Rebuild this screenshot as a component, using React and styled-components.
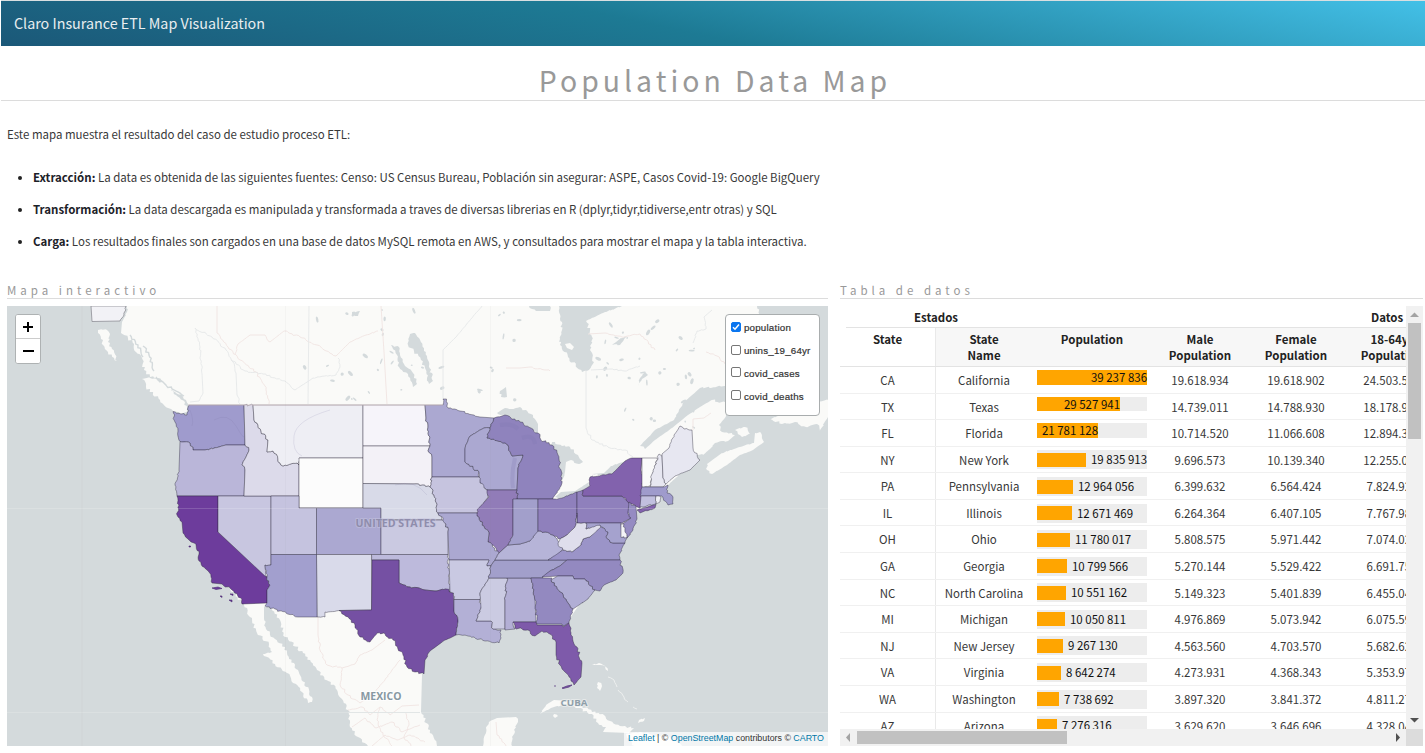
import React from "react";
import styled, { createGlobalStyle } from "styled-components";

const sans = '"Noto Sans CJK SC", "Noto Sans", sans-serif';

const GlobalStyle = createGlobalStyle`
  * { box-sizing: border-box; }
  html, body { margin: 0; padding: 0; background: #fff; overflow: hidden; }
  body { font-family: ${sans}; font-size: 11.47px; color: #383838; }
`;

const Page = styled.div`
  width: 1425px;
  height: 753px;
  display: flex;
  flex-direction: column;
  overflow: hidden;
`;

const Navbar = styled.header`
  height: 46px;
  flex: none;
  margin-left: 1px;
  padding: 0 0 2px 13px;
  border-top: 1px solid #d9dfe1;
  display: flex;
  align-items: center;
  background: linear-gradient(12deg, #1b5878 0%, #1d7a94 46%, #43c0e7 100%);
  color: #e9eef0;
  font-size: 14.3px;
  font-weight: 400;
`;

const Title = styled.h1`
  flex: none;
  margin: 0 0 0 1px;
  height: 55px;
  padding: 13px 0 0 4px;
  border-bottom: 1px solid #dcdcdc;
  text-align: center;
  font-size: 28.4px;
  line-height: 42px;
  font-weight: 400;
  letter-spacing: 4px;
  color: #999;
`;

const Intro = styled.section`
  flex: none;
  height: 182px;
  padding: 23px 0 0 7px;
  line-height: 20px;
`;

const Paragraph = styled.p`
  margin: 0;
`;

const List = styled.ul`
  margin: 23px 0 0;
  padding: 0 0 0 26px;
`;

const Item = styled.li`
  height: 32px;
  b { color: #1c2128; }
  &::marker { color: #222; }
`;

const Panels = styled.main`
  display: flex;
  gap: 12px;
  padding-left: 7px;
`;

const Panel = styled.section`
  width: ${(p) => p.$width}px;
  flex: none;
  display: flex;
  flex-direction: column;
`;

const PanelTitle = styled.h2`
  margin: 0 0 7px;
  height: 16px;
  border-bottom: 1px solid #dcdcdc;
  font-size: 11.5px;
  line-height: 15px;
  font-weight: 400;
  letter-spacing: 4px;
  color: #999;
`;

const MapFrame = styled.div`
  position: relative;
  height: 440px;
  overflow: hidden;
  background: #d4dadc;
  font-family: "Liberation Sans", Arial, sans-serif;
`;

const ZoomControl = styled.div`
  position: absolute;
  left: 8px;
  top: 8px;
  width: 26px;
  height: 50px;
  border: 1px solid #aeb2b3;
  border-radius: 3px;
  background: #fff;
  overflow: hidden;
`;

const ZoomButton = styled.button`
  display: flex;
  align-items: center;
  justify-content: center;
  width: 24px;
  height: 24px;
  padding: 0;
  border: 0;
  border-bottom: ${(p) => (p.$divider ? "1px solid #ccc" : "0")};
  background: #fff;
`;

const Layers = styled.div`
  position: absolute;
  right: 8px;
  top: 8px;
  width: 95px;
  height: 102px;
  padding: 5px 0 0 5px;
  border: 1px solid #a9adae;
  border-radius: 4px;
  background: #fff;
`;

const LayerLabel = styled.label`
  display: flex;
  align-items: flex-start;
  gap: 2px;
  height: 23px;
  font-size: 9.75px;
  line-height: 16px;
  letter-spacing: 0.2px;
  color: #333;
  -webkit-text-stroke: 0.2px #333;
`;

const Box = styled.span`
  flex: none;
  width: 10px;
  height: 10px;
  margin-top: ${(p) => p.$top}px;
  margin-right: 1px;
  border: 1px solid ${(p) => (p.$on ? "#0b76ef" : "#767676")};
  border-radius: 2px;
  background: ${(p) => (p.$on ? "#0b76ef" : "#fff")};
  svg { display: block; }
`;

const Attribution = styled.div`
  position: absolute;
  right: 0;
  bottom: 0;
  height: 14px;
  padding: 0 4px;
  background: rgba(255, 255, 255, 0.7);
  font-size: 8.85px;
  line-height: 13px;
  white-space: nowrap;
  color: #333;
  a { color: #0078a8; }
`;

const TableFrame = styled.div`
  display: grid;
  grid-template: 423px 17px / 566px 17px;
`;

const Viewport = styled.div`
  overflow: hidden;
`;

const Grid = styled.div`
  width: 600px;
`;

const GroupRow = styled.div`
  display: flex;
  height: 22px;
  margin-left: 6px;
  padding-top: 3px;
  border-bottom: 1px solid #e3e3e3;
  line-height: 17px;
  font-weight: 700;
  color: #222;
`;

const GroupCell = styled.div`
  width: ${(p) => p.$width}px;
  padding-left: ${(p) => p.$indent}px;
`;

const HeadRow = styled.div`
  display: flex;
  height: 39px;
  border-bottom: 1px solid #e3e3e3;
  background: #f7f7f7;
  font-weight: 700;
  color: #222;
`;

const Row = styled.div`
  display: flex;
  height: 26.58px;
  border-bottom: 1px solid #f0f0f0;
`;

const Cell = styled.div`
  width: ${(p) => p.$width}px;
  flex: none;
  text-align: center;
  line-height: ${(p) => (p.$head ? 16 : 26)}px;
  padding-top: ${(p) => (p.$head ? 3 : 0)}px;
  background: ${(p) => (p.$frozen ? "#fff" : "transparent")};
  border-right: ${(p) => (p.$frozen ? "1px solid #e9e9e9" : "0")};
  height: 100%;
  overflow: hidden;
`;

const BarCell = styled.div`
  width: 120px;
  flex: none;
  padding: ${(p) => (p.$inside ? "3.3px" : "3.7px")} 5px 0;
`;

const Track = styled.div`
  display: flex;
  align-items: center;
  height: ${(p) => (p.$inside ? 14.6 : 19)}px;
  background: #ededed;
  line-height: 15px;
  white-space: nowrap;
  color: #111;
`;

const Fill = styled.div`
  flex: none;
  height: ${(p) => (p.$inside ? "100%" : "14px")};
  background: #ffa500;
  display: flex;
  justify-content: flex-end;
  margin-right: ${(p) => (p.$inside ? 0 : 5)}px;
`;

const VBar = styled.div`
  background: #f1f1f1;
  display: flex;
  flex-direction: column;
  align-items: center;
  justify-content: space-between;
`;

const HBar = styled.div`
  background: #f1f1f1;
  display: flex;
  align-items: center;
  justify-content: space-between;
`;

const Thumb = styled.div`
  width: ${(p) => p.$w}px;
  height: ${(p) => p.$h}px;
  background: #c1c1c1;
`;

const Slot = styled.div`
  flex: 1;
  display: flex;
  justify-content: ${(p) => (p.$vertical ? "center" : "flex-start")};
`;

const Corner = styled.div`
  background: #dcdcdc;
`;

const ArrowIcon = styled.svg`
  flex: none;
  width: 17px;
  height: 17px;
`;

const Arrow = ({ d, color }) => (
  <ArrowIcon viewBox="0 0 17 17">
    <path d={d} fill={color} />
  </ArrowIcon>
);

/* ---------- map geometry ---------- */

const noise = (x, y, k) => {
  const v = Math.sin(x * 12.9898 + y * 78.233 + k * 37.719) * 43758.5453;
  return v - Math.floor(v) - 0.5;
};

/* Breaks slanted edges into small irregular steps; an edge shared by two shapes gets the same steps. */
const rough = (pts, amp = 2.2, open = false) => {
  const p = pts.trim().split(/\s+/).map((s) => s.split(",").map(Number));
  const out = [];
  const last = open ? p.length - 1 : p.length;
  for (let i = 0; i < last; i++) {
    const a = p[i];
    const b = p[(i + 1) % p.length];
    out.push(a);
    const dx = b[0] - a[0];
    const dy = b[1] - a[1];
    const len = Math.hypot(dx, dy);
    if (Math.abs(dx) < 1.1 && len > 9) continue;
    if (Math.abs(dy) < 1.1 && len > 9) continue;
    if (len > 42) continue;
    const n = Math.floor(len / 2);
    const flip = a[0] > b[0] || (a[0] === b[0] && a[1] > b[1]);
    for (let j = 1; j < n; j++) {
      const k = flip ? n - j : j;
      const w = noise(a[0] + b[0], a[1] + b[1], k) * amp;
      out.push([a[0] + (dx * j) / n + w, a[1] + (dy * j) / n - w * 0.8]);
    }
  }
  if (open) out.push(p[p.length - 1]);
  return "M" + out.map((q) => q[0].toFixed(1) + "," + q[1].toFixed(1)).join("L") + (open ? "" : "Z");
};

const states = [
  ["WA", "#9f9bcd", "189,405 244,405 245,445 226,445 205,450 193,450 190,443 180,441.5 178,431 175,422 173,411.5 181,414 187,415"],
  ["OR", "#bab6d9", "180,441.5 190,443 193,450 205,450 226,445 245,445 249,450 246,457 242,465 245,470 244,496 177,496 175,485 179,470"],
  ["CA", "#6d3c9c", "177,496 218,496 218,532 267,577 270,585 267,590 267,603 242,604 241,598 232,590 222,584 212,583 211,577 207,570 199,561 199,554 194,543 189,540 183,533 182,522 177,515 179,505"],
  ["NV", "#c8c6e0", "218,496 271,496 271,565 265,565 266,577 218,532"],
  ["ID", "#dcdaea", "244,405 253,405 254,420 261,431 268,440 267,452 273,451 280,463 283,466 297,463 299,465 299,496 244,496 245,470 242,465 246,457 249,450 245,445"],
  ["MT", "#eeeef4", "253,405 363,405 363,458 299,458 299,465 297,463 283,466 280,463 273,451 267,452 268,440 261,431 254,420"],
  ["WY", "#fcfcfc", "299,458 363,458 363,508 299,508"],
  ["UT", "#c5c3df", "271,496 299,496 299,508 316.5,508 316.5,554.5 271,554.5"],
  ["CO", "#aba8d1", "316.5,508 381,508 381,554.5 316.5,554.5"],
  ["ND", "#f6f4fa", "363,405 425,405 426,418 428,425 430,446 363,446"],
  ["SD", "#f3f1f7", "363,446 430,446 428,451 432,457 432,477 430,487 414,484 363,483.5"],
  ["NE", "#d8dae8", "363,483.5 414,484 430,487 434,495 438,513 442,520 381,520 381,508 363,508"],
  ["KS", "#cac9e1", "381,520 442,520 446,524 448,532 448,554.5 381,554.5"],
  ["OK", "#bdbadc", "371.5,554.5 448,554.5 450,592 446,589 435,591 425,590 410,587 399,583 399,560 371.5,560"],
  ["NM", "#d9daea", "316.5,554.5 371.5,554.5 371.5,610 339,610.5 325,612 325,617 317,617"],
  ["AZ", "#a29fce", "271,554.5 316.5,554.5 317,617 298,617 265,606 267,603 267,590 270,585 267,577 265,565 271,565"],
  ["TX", "#7550a3", "372,560 399,560 399,583 410,587 425,590 435,591 446,589 453.5,593 454,611 458,620 456,635 445,640 430,651 425,660 424,674 415,672 407,667 403,655 393,640 385,634 377,633 370,642 360,637 355,625 339,610.5 371.5,610"],
  ["MN", "#aba8d1", "425,405 443,405 443,399 446.5,399 448,408 460,411 480,417 494,418 490,428 484,428 470,436 465,449 465,462 479,472 479,477 432,477 432,457 428,451 430,446 428,425 426,418"],
  ["WI", "#aba8d1", "470,436 484,428 490,428 487,438 508,445 512,456 523,455 518,468 517,490 487,490 480,483 479,472 465,462 465,449"],
  ["MI", "#8f83bd", "494,418 505,415 520,422 538,433 541,440 552,445 558,455 562,478 561,486 555,495 553,499 517,499 517,490 518,468 523,455 512,456 508,445 487,438 490,428"],
  ["IA", "#c6c4df", "432,477 479,477 480,483 489,492 488,497 477,513 438,513 434,495 430,487"],
  ["IL", "#917cb8", "487,490 517,490 517,499 513,499 513,535 508,545 499,553 496,548 488,542 489,533 477,516 477,510 489,497"],
  ["MO", "#aba8d1", "438,513 477,513 477,516 489,533 488,542 499,553 495,560 491,566 487,566 489,560 449,560 448,532 446,524"],
  ["AR", "#c9c9e2", "449,560 489,560 487,566 491,566 489,578 480,593 480,599.5 454,599.5 453.5,593 450,592"],
  ["LA", "#b3b0d6", "454,599.5 480,599.5 481,608 476,621 491,621 493,629 501,630 501,638 499,643 485,641 474,637 456,635 458,620 454,611"],
  ["MS", "#cbcbe2", "489,578 507,578 505,600 505,629 493,629 491,621 476,621 481,608 480,593"],
  ["AL", "#b3afd5", "507,578 531,578 535,600 536,622 513,622 515,629 505,630 505,600"],
  ["TN", "#a29fcb", "495,560 567,560 560,566 550,571 542,578 489,578 491,566"],
  ["KY", "#b6b4d8", "499,553 508,545 520,544 530,541 537,531 541,531 553,535 558,541 563,549 556,556 548,560 495,560"],
  ["IN", "#a29fcb", "513,499 538,499 538,531 530,541 520,544 508,545 513,535"],
  ["OH", "#8f80bc", "538,499 555,499 562,498 577,492 577,513 575,527 567,535 560,539 553,535 541,531 538,531"],
  ["PA", "#8f80bc", "577,492 583,490 583,496 622,496 630,504 628,514 631,518 622,523 577,523"],
  ["NY", "#8262ad", "583,490 590,486 590,477 612,474 625,461 632,458 642,458 641,470 643,490 641,500 640,508 628,502 622,496 583,496"],
  ["LI", "#8262ad", "637,510 650,506 656,504.5 655,508 640,513"],
  ["NJ", "#958bc2", "629,502 636,507 637,519 633,530 627,538 622,531 621,525 631,518 628,512"],
  ["VT", "#fafafa", "642,458 657,458 654,470 650,486 642,487"],
  ["NH", "#e7e7f1", "659,454 662,456 663,478 666,484 663,487 650,487 652,474"],
  ["ME", "#e7e7f1", "662,454 669,448 674,435 680,426 684,429 692,430 693,448 700,460 690,470 675,476 666,484 663,478"],
  ["MA", "#9f9bcc", "642,487 663,487 668,485 667,493 673,497 673,504 668,505 662,496 640,496"],
  ["CT", "#c1bfdf", "641,496 656,496 656,504 640,507"],
  ["RI", "#efeff5", "656,496 661,497 660,502 656,504"],
  ["VA", "#9b94c8", "548,560 563,550 572,552 581,545 583,539 590,537 595,530 600,524 608,532 606,537 613,543 625,543 619,555 620,560"],
  ["WV", "#dfdeec", "575,527 577,513 577,523 586,523 586,529 598,524 601,527 590,537 583,539 581,545 572,552 563,550 558,543 560,539 567,535"],
  ["MD", "#a5a2ce", "586,523 621,523 622,537 627,538 625,543 613,543 606,537 608,532 600,525 586,529"],
  ["DE", "#f4f4f8", "621,524 624,524 625,532 627,537.5 621,537.5"],
  ["NC", "#9389c0", "567,560 620,560 623,573 616,580 604,585 600,591 595,590 585,579 574,579 573,576 558,576 542,577 550,571 560,566"],
  ["SC", "#b1aed5", "551,580 558,576 573,576 574,579 585,579 595,590 588,599 573,609 568,603 560,592"],
  ["GA", "#9389c0", "531,578 552,578 551,580 560,592 568,603 573,609 569,623 563,626 562,624 537,624 535,600"],
  ["FL", "#7e5aaa", "513,622 536,622 537,625 562,625 563,627 569,623 571,635 577,647 582,663 581,677 574,685 571,681 565,672 560,665 556,655 556,642 547,632 542,631 535,636 528,630 515,628"],
];

const land = [
  "127,306 127,312 122,322 121,333 128,338 134,344 136,352 142,358 144,370 150,377 158,378 167,386 175,392 183,397 186,400 189,405 180,445 182,500 220,575 244,605 250,617 257,633 269,644 272,652 263,654 275,664 287,673 293,683 302,692 308,703 312,702 312,697 298,670 287,653 285,647 275,639 266,629 264,618 264,606 270,607 280,620 285,637 303,653 317,670 337,690 348,710 350,727 358,737 368,746 437,746 430,730 421,712 422,675 424,650 450,634 490,628 540,620 570,618 600,575 618,550 630,515 655,498 668,485 692,463 697,455 703,455 710,449 715,443 722,441 728,441 735,435 722,432 719,425 726,416 727,403 712,400 700,407 688,415 672,428 655,440 645,449 640,446 655,430 674,420 683,403 700,388 726,386 770,340 762,318 757,306 622,306 603,313 586,321 592,337 590,350 594,362 589,370 582,372 568,357 560,345 562,322 559,306",
  "98,330 107,330 110,334 108,342 112,349 117,361 108,352 101,339",
  "142,379 150,378 168,385 176,395 185,402 188,412 180,414 171,409 160,400 146,387",
  "707,464 722,453 740,447 754,443 755,433 761,433 764,442 753,450 740,455 727,465 712,474 707,470",
  "735,430 745,427 750,434 742,437",
  "770,419 785,413 800,407 812,408 818,402 828,400 828,417 820,431 817,424 806,427 795,422 782,424",
  "540,714 546,705 554,700 570,701 582,706 592,712 604,715 610,721 620,726 634,728 629,733 603,732 606,727 598,723 592,714 578,708 562,705 551,708",
  "483,746 486,728 490,721 497,718 516,717 518,722 514,730 512,746",
  "626,734 640,732 652,735 672,738 682,746 634,746",
  "598,682 602,686 600,691 597,688",
  "639,720 645,718 644,721 638,723",
  "554,714 558,716 555,718 553,716",
  "592,665 599,663 605,666 608,671 606,667 600,665",
];

const lakes = [
  "497,413 505,408 512,409 520,407 533,415 538,424 538,434 520,424 505,416",
  "552,442 562,446 570,447 578,455 583,462 579,464 571,460 566,462 565,472 562,481 558,462 553,449",
  "555,497 561,492 575,491 589,482 590,486 577,493 563,499",
  "592,474 604,473 611,466 625,461 621,466 613,474 603,476",
  "410,334 415,333 419,338 424,351 429,362 431,374 427,372 421,360 414,351 408,345",
  "391,345 399,347 400,355 404,364 413,373 417,384 413,387 408,374 399,367 397,355",
  "427,370 432,373 433,381 429,384 427,378",
  "500,391 506,387 507,397 501,397",
  "529,306 550,306 550,311 536,311",
  "352,312 360,311 358,316 352,314",
  "612,345 621,338 627,336 620,345",
  "640,378 645,372 648,375 642,379 638,386",
];

const lines = [
  "217,306 217,333 228,347 240,360 256,372 265,386 269,404",
  "195,328 200,347 202,374 203,393 199,401 190,402",
  "195,328 212,337 226,350 233,362 236,373 237,395 240,404",
  "235,354 238,344 250,335 265,335 270,342 284,331 300,337 317,345 336,356 350,342 366,335 378,331",
  "231,360 245,371 263,374 285,381 295,390 313,378 336,375 340,367 338,358",
  "309,306 308,404",
  "381,306 384,352 387,404",
  "443,399 443,350 455,338 482,306",
  "586,370 586,428 592,440 610,448 625,450 633,457",
  "588,334 605,333 622,337 640,334 655,350",
  "591,370 610,369 625,371 640,366",
  "693,343 697,331 706,329 704,317 712,310",
  "706,352 717,356 725,364",
  "506,368 520,368 530,367 550,371",
  "693,430 693,419 704,418 711,413",
  "318,617 318,635 320,650 327,665 342,668 355,664 360,655 372,650 385,640",
  "342,668 340,685 348,695 360,703 372,695 385,680 392,670 400,660",
  "348,710 362,707 370,715 380,707 390,715 402,706 419,705",
  "352,727 365,718 376,728 392,722 402,732 420,725",
  "372,746 385,735 397,740 410,735 425,742",
  "380,707 377,720 383,735 392,746",
  "405,712 409,725 404,738 411,746",
  "496,722 497,735 506,746",
];

const MapSvg = styled.svg`
  display: block;
`;

const PoliticalMap = () => (
  <MapSvg width="821" height="440" viewBox="7 306 821 440">
    <rect x="7" y="306" width="821" height="440" fill="#d4dadc" />
    {land.map((p, i) => (
      <path key={i} d={rough(p, 2.6)} fill="#fafaf8" />
    ))}
    {lakes.map((p, i) => (
      <path key={i} d={rough(p, 2.2)} fill="#d4dadc" />
    ))}
    <path d={rough("143,346 149,355 154,371", 2, true) + rough("130,335 138,345 143,357", 2, true) + rough("156,377 172,389 184,396", 2, true)} fill="none" stroke="#d4dadc" strokeWidth="1.4" />
    {Array.from({ length: 75 }, (_, i) => {
      const x = i < 38 ? 300 + (noise(i, 3, 1) + 0.5) * 225 : 592 + (noise(i, 5, 2) + 0.5) * 105;
      const y = i < 38 ? 309 + (noise(i, 9, 4) + 0.5) * 92 : 320 + (noise(i, 7, 3) + 0.5) * 108;
      return <ellipse key={i} cx={x} cy={y} rx={1 + (i % 4) * 0.7} ry={0.8 + (i % 3) * 0.4} fill="#d4dadc" transform={`rotate(${i * 37} ${x} ${y})`} />;
    })}
    {lines.map((p, i) => (
      <path key={i} d={rough(p, 1.8, true)} fill="none" stroke={i % 3 === 0 || i > 12 ? "#f1e4e2" : "#e5e8e9"} strokeWidth="0.9" />
    ))}
    <path d="M565,344l5,-1 4,4 -2,3 -5,-2z" fill="#fafaf8" />
    <path d={rough("91,306 92,321.5 120,321 124,315 126,306")} fill="#f2f2f6" stroke="#8e8e96" strokeWidth="0.8" />
    {states.map(([id, fill, pts]) => (
      <path key={id} d={rough(pts)} fill={fill} stroke="#282536" strokeOpacity="0.5" strokeWidth="0.8" strokeLinejoin="round" />
    ))}
    <path d="M188,405H443" stroke="#dacccf" strokeWidth="0.8" />
    <path d="M212,588l6,-1 4,1.5 -6,1z M220,596l2,0 0,1.5z M230,594l3,0 0,1.5z M229,600l3,0 0,2z M189,546h1.500v1h-1.500z" fill="#6d3c9c" stroke="#4a2a70" strokeWidth="0.6" />
    <path d="M562,688l5,-2 5,-1 -3,2 -6,1.500z M554,686h2" fill="#7e5aaa" stroke="#5a3c80" strokeWidth="0.8" />
    <path d="M515,458q-4,16 -2,30 M522,438q12,-4 13,6 M500,425q12,-2 18,4" stroke="#7f76b5" strokeOpacity="0.25" strokeWidth="4" fill="none" />
    <path d="M190,410q4,10 2,16 M214,420q14,-8 22,6 t8,10 M330,410q-34,10 -36,26 t8,20 M395,485q20,-6 32,10" stroke="#77749f" strokeOpacity="0.15" strokeWidth="1" fill="none" />
    <path d="M7,508.500H828M7,712.500H828" stroke="#fff" strokeOpacity="0.16" />
    <path d="M348,712.500H420" stroke="#e2e6e6" />
    <path d="M82,306V746M285.500,306V746M490.500,306V746" stroke="#888" strokeOpacity="0.05" />
    <path d={rough("608,677 614,680 617,687", 2, true) + rough("618,690 624,697 628,702", 2, true) + rough("633,707 637,709", 2, true)} fill="none" stroke="#f3f4f3" strokeWidth="0.8" />
    <g fontFamily='"Open Sans", "Noto Sans", sans-serif' fontWeight="700" paintOrder="stroke" strokeWidth="2" strokeLinejoin="round">
      <text x="355.500" y="526.500" fontSize="10.200" textLength="80" lengthAdjust="spacingAndGlyphs" fill="#8f8dac" stroke="#c6c5df" strokeOpacity="0.5">UNITED STATES</text>
      <text x="360.500" y="699.500" fontSize="10.200" textLength="41" lengthAdjust="spacingAndGlyphs" fill="#8798a2" stroke="#fff" strokeOpacity="0.8">MEXICO</text>
      <text x="560.500" y="705.500" fontSize="9" textLength="27" lengthAdjust="spacingAndGlyphs" fill="#8f9fa9" stroke="#eef0f0" strokeOpacity="0.7">CUBA</text>
    </g>
  </MapSvg>
);

const layers = [
  ["population", 2, true],
  ["unins_19_64yr", 2, false],
  ["covid_cases", 1, false],
  ["covid_deaths", 1, false],
];

const rows = [
  ["CA", "California", "39 237 836", 110, "19.618.934", "19.618.902", "24.503.543"],
  ["TX", "Texas", "29 527 941", 83, "14.739.011", "14.788.930", "18.178.936"],
  ["FL", "Florida", "21 781 128", 61, "10.714.520", "11.066.608", "12.894.361"],
  ["NY", "New York", "19 835 913", 49, "9.696.573", "10.139.340", "12.255.047"],
  ["PA", "Pennsylvania", "12 964 056", 36, "6.399.632", "6.564.424", "7.824.926"],
  ["IL", "Illinois", "12 671 469", 35, "6.264.364", "6.407.105", "7.767.984"],
  ["OH", "Ohio", "11 780 017", 33, "5.808.575", "5.971.442", "7.074.026"],
  ["GA", "Georgia", "10 799 566", 30, "5.270.144", "5.529.422", "6.691.756"],
  ["NC", "North Carolina", "10 551 162", 29, "5.149.323", "5.401.839", "6.455.048"],
  ["MI", "Michigan", "10 050 811", 28, "4.976.869", "5.073.942", "6.075.594"],
  ["NJ", "New Jersey", "9 267 130", 26, "4.563.560", "4.703.570", "5.682.623"],
  ["VA", "Virginia", "8 642 274", 24, "4.273.931", "4.368.343", "5.353.977"],
  ["WA", "Washington", "7 738 692", 22, "3.897.320", "3.841.372", "4.811.276"],
  ["AZ", "Arizona", "7 276 316", 20, "3.629.620", "3.646.696", "4.328.045"],
];

const DataRow = ({ row }) => {
  const [code, name, pop, width, male, female, adult] = row;
  const inside = width > 50;
  return (
    <Row>
      <Cell $width={96} $frozen>{code}</Cell>
      <Cell $width={96}>{name}</Cell>
      <BarCell $inside={inside}>
        <Track $inside={inside}>
          <Fill $inside={inside} style={{ width }}>{inside && pop}</Fill>
          {!inside && pop}
        </Track>
      </BarCell>
      <Cell $width={96}>{male}</Cell>
      <Cell $width={96}>{female}</Cell>
      <Cell $width={96}>{adult}</Cell>
    </Row>
  );
};

export default function App() {
  return (
    <Page>
      <GlobalStyle />
      <Navbar>Claro Insurance ETL Map Visualization</Navbar>
      <Title>Population Data Map</Title>
      <Intro>
        <Paragraph>Este mapa muestra el resultado del caso de estudio proceso ETL:</Paragraph>
        <List>
          <Item><b>Extracción:</b> La data es obtenida de las siguientes fuentes: Censo: US Census Bureau, Población sin asegurar: ASPE, Casos Covid-19: Google BigQuery</Item>
          <Item><b>Transformación:</b> La data descargada es manipulada y transformada a traves de diversas librerias en R (dplyr,tidyr,tidiverse,entr otras) y SQL</Item>
          <Item><b>Carga:</b> Los resultados finales son cargados en una base de datos MySQL remota en AWS, y consultados para mostrar el mapa y la tabla interactiva.</Item>
        </List>
      </Intro>
      <Panels>
        <Panel $width={821}>
          <PanelTitle>Mapa interactivo</PanelTitle>
          <MapFrame>
            <PoliticalMap />
            <ZoomControl>
              <ZoomButton $divider aria-label="Zoom in">
                <svg width="10" height="10" viewBox="0 0 10 10"><path d="M5,0V10M0,5H10" stroke="#000" strokeWidth="2" /></svg>
              </ZoomButton>
              <ZoomButton aria-label="Zoom out">
                <svg width="11" height="10" viewBox="0 0 11 10"><path d="M0,5H11" stroke="#000" strokeWidth="2" /></svg>
              </ZoomButton>
            </ZoomControl>
            <Layers>
              {layers.map(([name, top, on]) => (
                <LayerLabel key={name}>
                  <Box $top={top} $on={on}>
                    {on && <svg width="8" height="8" viewBox="0 0 8 8"><path d="M1,4.200L3,6.200 7,1.500" fill="none" stroke="#fff" strokeWidth="1.500" /></svg>}
                  </Box>
                  {name}
                </LayerLabel>
              ))}
            </Layers>
            <Attribution><a>Leaflet</a> | © <a>OpenStreetMap</a> contributors © <a>CARTO</a></Attribution>
          </MapFrame>
        </Panel>
        <Panel $width={583}>
          <PanelTitle>Tabla de datos</PanelTitle>
          <TableFrame>
            <Viewport>
              <Grid>
                <GroupRow>
                  <GroupCell $width={186} $indent={68}>Estados</GroupCell>
                  <GroupCell $width={380} $indent={339}>Datos</GroupCell>
                </GroupRow>
                <HeadRow>
                  <Cell $width={96} $head $frozen>State</Cell>
                  <Cell $width={96} $head>State<br />Name</Cell>
                  <Cell $width={120} $head>Population</Cell>
                  <Cell $width={96} $head>Male<br />Population</Cell>
                  <Cell $width={96} $head>Female<br />Population</Cell>
                  <Cell $width={96} $head>18-64yr<br />Population</Cell>
                </HeadRow>
                {rows.map((r) => <DataRow key={r[0]} row={r} />)}
              </Grid>
            </Viewport>
            <VBar>
              <Arrow d="M4,11H13L8.500,6.500Z" color="#a3a3a3" />
              <Slot $vertical><Thumb $w={13} $h={116} /></Slot>
              <Arrow d="M4,6H13L8.500,10.500Z" color="#505050" />
            </VBar>
            <HBar>
              <Arrow d="M10,4V13L6,8.500Z" color="#a3a3a3" />
              <Slot><Thumb $w={210} $h={13} /></Slot>
              <Arrow d="M7,4V13L11,8.500Z" color="#505050" />
            </HBar>
            <Corner />
          </TableFrame>
        </Panel>
      </Panels>
    </Page>
  );
}
